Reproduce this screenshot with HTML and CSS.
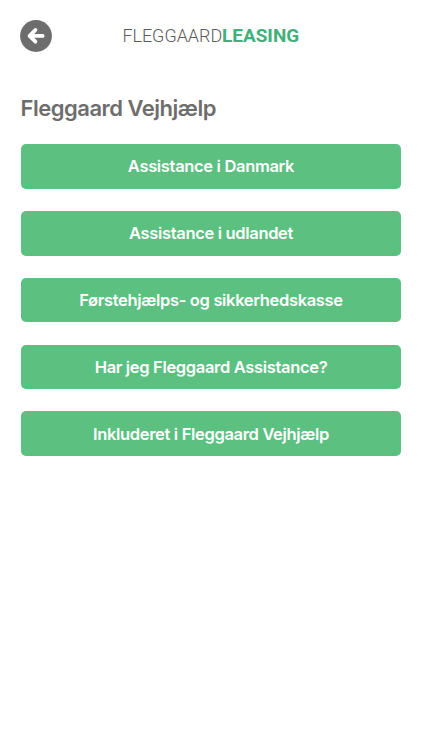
FILE: index.html
```html
<!DOCTYPE html>
<html lang="da">
<head>
<meta charset="utf-8">
<title>Fleggaard Vejhjælp</title>
<link rel="stylesheet" href="styles.css">
</head>
<body>
<header class="topbar">
<button class="back" aria-label="Tilbage"><svg viewBox="0 0 32 32" width="32" height="32"><circle cx="16" cy="16" r="15.9" fill="#6e6d6e"/><path d="M22.6 15.9H10.5M15.4 10L9.6 15.9l5.8 5.7" fill="none" stroke="#fff" stroke-width="3.9" stroke-linecap="round" stroke-linejoin="round"/></svg></button>
<svg class="logo" viewBox="0 0 180 24" width="180" height="24"><text class="light" x="1.4" y="18" textLength="99.8" lengthAdjust="spacingAndGlyphs">FLEGGAARD</text><text class="bold" x="101" y="18" textLength="77.2" lengthAdjust="spacingAndGlyphs">LEASING</text></svg>
</header>
<main>
<h1>Fleggaard Vejhjælp</h1>
<nav class="menu">
<button>Assistance i Danmark</button>
<button>Assistance i udlandet</button>
<button>Førstehjælps- og sikkerhedskasse</button>
<button>Har jeg Fleggaard Assistance?</button>
<button>Inkluderet i Fleggaard Vejhjælp</button>
</nav>
</main>
</body>
</html>
```
FILE: styles.css
```css
* { box-sizing: border-box; }
body { margin: 0; background: #fff; font-family: Inter, sans-serif; }
.topbar { display: grid; grid-template-columns: 32px 1fr 32px; align-items: center; height: 72px; padding: 0 20px; }
.back { width: 32px; height: 32px; padding: 0; border: 0; background: none; }
.back svg, .logo { display: block; }
.logo { justify-self: center; }
.logo text { font-family: Roboto, sans-serif; font-size: 17.6px; }
.logo .light { fill: #5c5b5c; font-weight: 300; }
.logo .bold { fill: #42b07a; font-weight: 700; }
main { padding: 21.4px 20.6px 0; }
h1 { margin: 0; height: 50.5px; font-size: 22px; line-height: 30px; font-weight: 600; letter-spacing: -0.5px; color: #6e6d6e; }
.menu { display: grid; gap: 22.15px; }
.menu button { height: 44.75px; padding: 0; border: 0; border-radius: 5px; background: #5cc081; color: #fff; font: 600 16.5px Inter, sans-serif; letter-spacing: -0.33px; }
```
